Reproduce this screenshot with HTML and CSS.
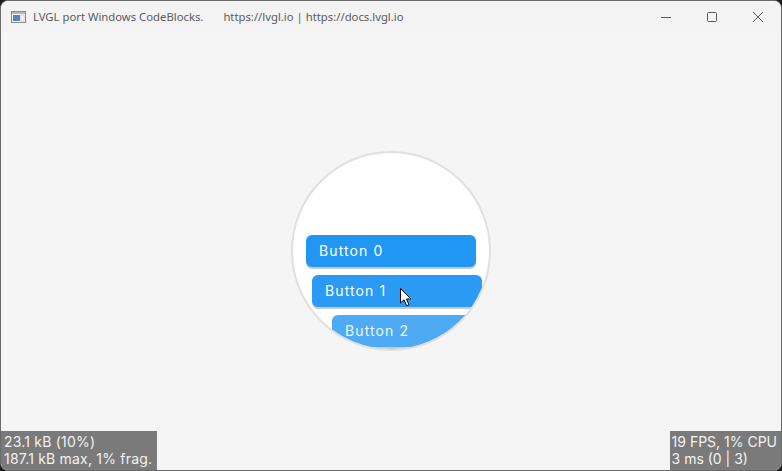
FILE: index.html
```html
<!DOCTYPE html>
<html>
<head>
<meta charset="utf-8">
<link rel="stylesheet" href="styles.css">
</head>
<body>
<div class="window">
  <div class="titlebar">
    <svg class="appicon" width="15" height="12" viewBox="0 0 15 12">
      <rect x="0.5" y="0.5" width="14" height="11" fill="#f4f4f4" stroke="#8a8a8a"/>
      <rect x="1" y="1" width="13" height="2" fill="#b8b8b8"/>
      <rect x="2" y="4" width="7" height="6" fill="#5a86ad"/>
      <rect x="10" y="4" width="3" height="6" fill="#ffffff" stroke="#aaaaaa" stroke-width="0.5"/>
    </svg>
    <span class="title">LVGL port Windows CodeBlocks.</span>
    <span class="title url">https://lvgl.io | https://docs.lvgl.io</span>
    <div class="controls">
      <svg width="46" height="32" viewBox="0 0 46 32"><line x1="18" y1="16.5" x2="28" y2="16.5" stroke="#5a5a5a" stroke-width="1"/></svg>
      <svg width="46" height="32" viewBox="0 0 46 32"><rect x="18.5" y="11.5" width="9" height="9" rx="1" fill="none" stroke="#5a5a5a" stroke-width="1"/></svg>
      <svg width="46" height="32" viewBox="0 0 46 32"><path d="M18 11 L28 21 M28 11 L18 21" stroke="#5a5a5a" stroke-width="1"/></svg>
    </div>
  </div>
  <div class="content">
    <div class="circle">
      <div class="btn b0">Button 0</div>
      <div class="btn b1">Button 1</div>
      <div class="btn b2">Button 2</div>
    </div>
    <svg class="cursor" width="14" height="20" viewBox="0 0 14 20">
      <path d="M0.5 0.5 L0.5 15 L4 11.8 L6.6 17.8 L9 16.8 L6.5 11 L11 11 Z" fill="#ffffff" stroke="#000000" stroke-width="1" stroke-linejoin="miter"/>
    </svg>
    <div class="mon left">23.1 kB (10%)<br>187.1 kB max, 1% frag.</div>
    <div class="mon right">19 FPS, 1% CPU<br>3 ms (0 | 3)</div>
  </div>
</div>
</body>
</html>
```
FILE: styles.css
```css
html, body {
  margin: 0;
  padding: 0;
  width: 782px;
  height: 471px;
  background: #1c1c1c;
  overflow: hidden;
}
.window {
  width: 782px;
  height: 471px;
  box-sizing: border-box;
  border: 1px solid #6a6a6a;
  border-radius: 8px;
  overflow: hidden;
  background: #f5f5f5;
  display: flex;
  flex-direction: column;
}
.titlebar {
  height: 31px;
  flex: none;
  background: #f3f3f3;
  display: flex;
  align-items: center;
  font-family: "Noto Sans", "Open Sans", sans-serif;
  font-size: 11.3px;
  color: #5c5c5c;
}
.appicon {
  margin-left: 10px;
  margin-right: 7px;
  margin-top: 1px;
}
.title {
  white-space: nowrap;
}
.url {
  margin-left: 20px;
}
.controls {
  margin-left: auto;
  display: flex;
  margin-right: 0;
}
.controls svg {
  display: block;
}
.content {
  flex: 1;
  position: relative;
  display: flex;
  align-items: center;
  justify-content: center;
}
.circle {
  width: 200px;
  height: 200px;
  box-sizing: border-box;
  border: 2px solid #e0e0e0;
  border-radius: 50%;
  background: #ffffff;
  overflow: hidden;
  display: flex;
  flex-direction: column;
  gap: 8px;
  padding-top: 82px;
  margin-left: 0;
}
.btn {
  flex: none;
  width: 170px;
  height: 32px;
  box-sizing: border-box;
  border-radius: 6px;
  background: #2196f3;
  box-shadow: 0 2px 0 #c8c8c8;
  color: #ffffff;
  font-family: "Inter", "Open Sans", sans-serif;
  font-size: 14px;
  letter-spacing: 1.1px;
  line-height: 32px;
  padding-top: 0;
  padding-left: 13px;
}
.b0 { margin-left: 13px; }
.b1 { margin-left: 19px; background: #2a9af4; }
.b2 { margin-left: 39px; background: #4eaaf3; color: #eef6fe; }
.cursor {
  position: absolute;
  left: 399px;
  top: 256px;
}
.mon {
  position: absolute;
  bottom: 0;
  background: #7a7a7a;
  color: #f2f2f2;
  font-family: "Inter", "Open Sans", sans-serif;
  font-size: 14px;
  letter-spacing: 0.2px;
  line-height: 17px;
  padding: 2px 4px 3px 4px;
  white-space: nowrap;
}
.mon.left { left: 0; padding-left: 3px; padding-right: 5px; }
.mon.right { right: 0; padding-left: 2px; padding-right: 4px; letter-spacing: 0; }
```
